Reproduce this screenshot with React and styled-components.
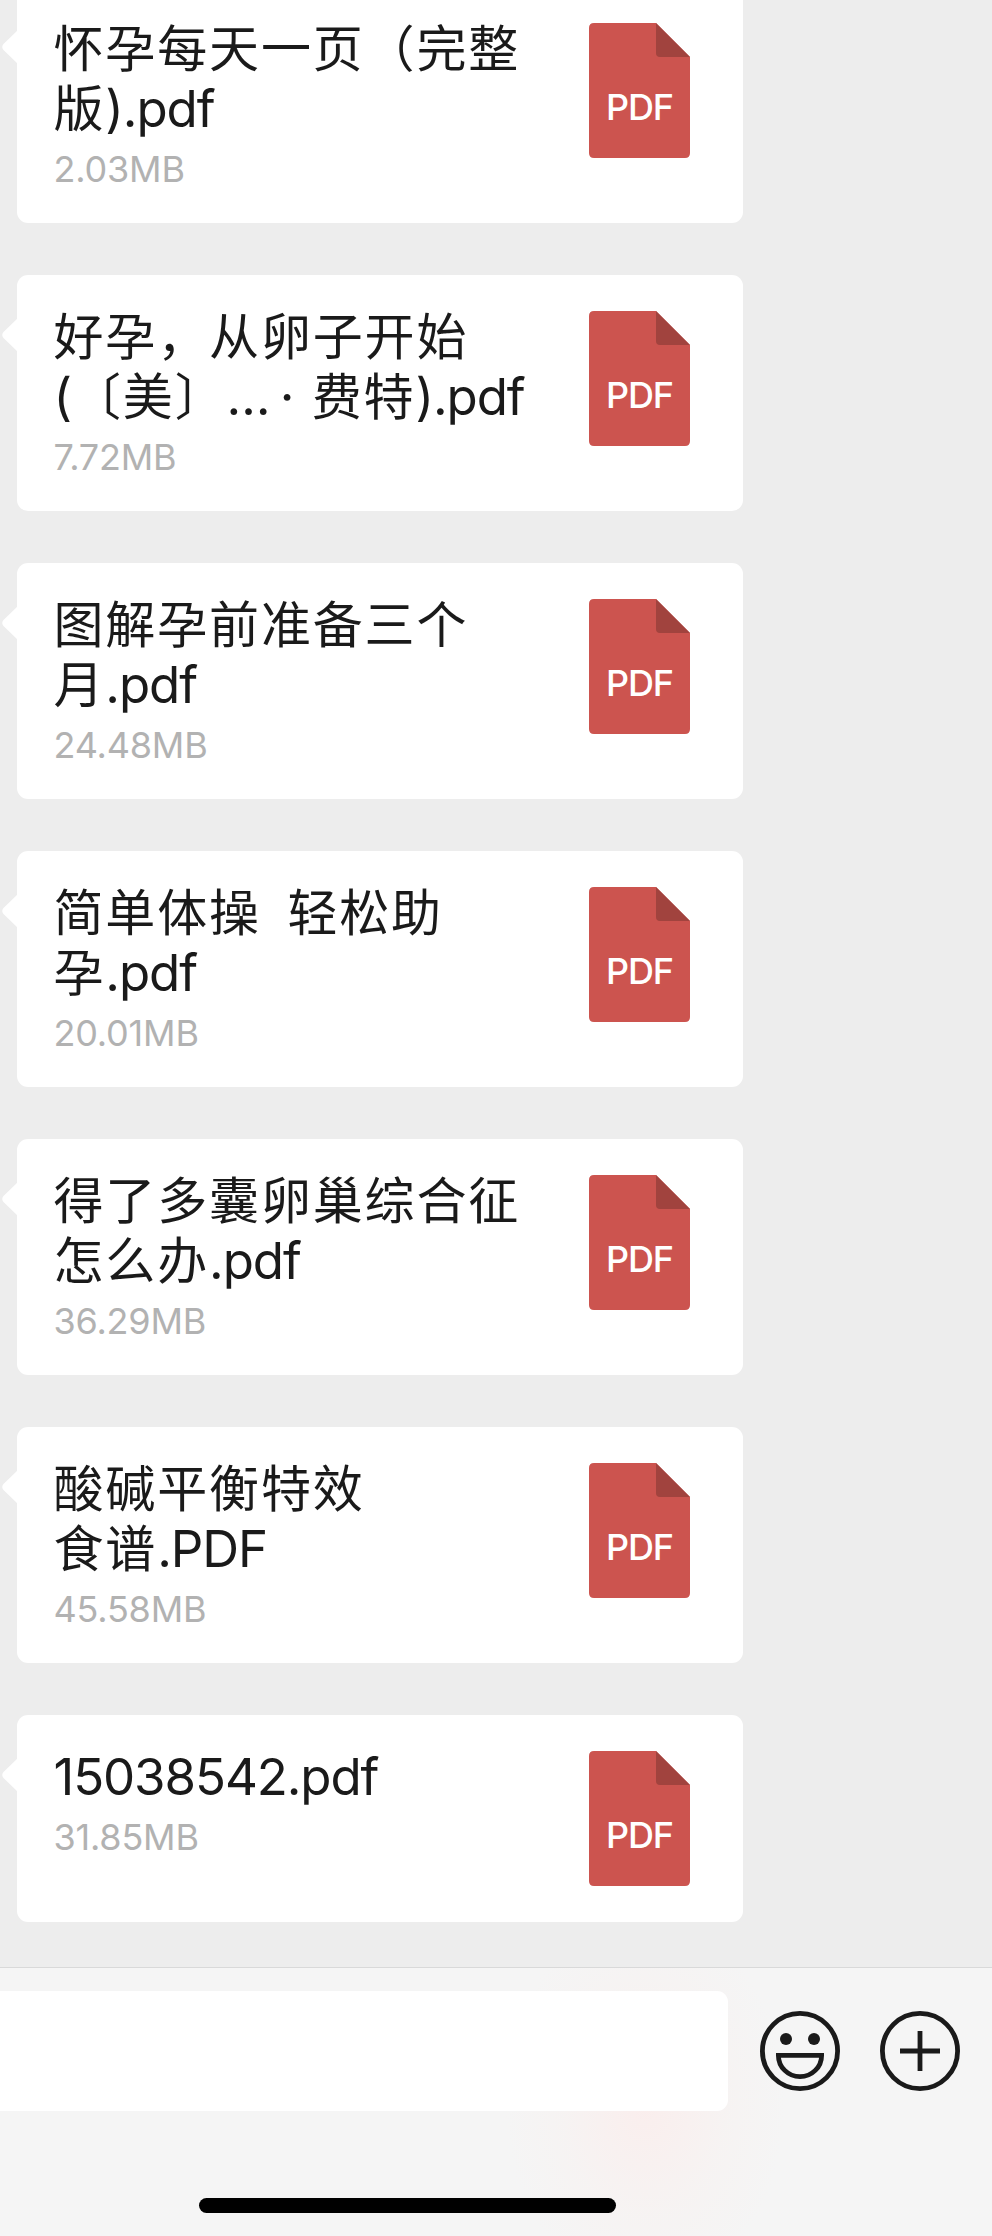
import React from "react"
import styled, { createGlobalStyle } from "styled-components"

const GlobalStyle = createGlobalStyle`
  * {
    box-sizing: border-box;
  }
  body {
    margin: 0;
    background-color: #ededed;
  }
`

const Screen = styled.div`
  display: flex;
  flex-direction: column;
  width: 992px;
  height: 2236px;
  overflow: hidden;
  background-color: #ededed;
  color: #1a1a1a;
  font-family: Inter, "Noto Sans CJK SC", sans-serif;
`

const MessageList = styled.main`
  flex: 1;
  min-height: 0;
  display: flex;
  flex-direction: column;
  justify-content: flex-end;
  gap: 52px;
  padding: 0 0 45px 17px;
`

const Bubble = styled.article`
  position: relative;
  flex: none;
  display: flex;
  justify-content: space-between;
  width: 726px;
  height: ${({ $short }) => ($short ? "207px" : "236px")};
  padding: 32px 53px 0 36.5px;
  border-radius: 11px;
  background-color: #fff;
`

const Tail = styled.svg`
  position: absolute;
  left: -16px;
  top: 43px;
  width: 17px;
  height: 34px;
`

const FileName = styled.h2`
  margin: 0;
  font-size: 50px;
  font-weight: 400;
  line-height: 60px;
  letter-spacing: 1.85px;
  text-spacing-trim: space-all;
  white-space: pre;
`

const NameLine = styled.span`
  display: block;
  height: 60px;
`

const Latin = styled.span`
  font-size: 51px;
  letter-spacing: ${({ $spacing }) => $spacing};
`

const FileSize = styled.p`
  margin: 6px 0 0;
  color: #b2b2b2;
  font-size: 36px;
  letter-spacing: -0.2px;
  line-height: 48px;
`

const FileIcon = styled.svg`
  flex: none;
  width: 101px;
  height: 135px;
  margin-top: 4px;
`

const Footer = styled.footer`
  flex: none;
  display: flex;
  flex-direction: column;
  justify-content: space-between;
  height: 269px;
  padding: 23px 0;
  border-top: 1px solid #d9d9d9;
  background: radial-gradient(ellipse 140px 190px at 645px 135px, #faeeed, rgba(247, 242, 241, 0.6) 60%, rgba(245, 245, 245, 0)), #f5f5f5;
`

const Toolbar = styled.div`
  display: flex;
  align-items: center;
`

const Input = styled.div`
  flex: none;
  width: 728px;
  height: 120px;
  margin-right: 32px;
  border-radius: 0 11px 11px 0;
  background-color: #fff;
`

const IconButton = styled.button`
  flex: none;
  width: 80px;
  height: 80px;
  margin-right: 40px;
  padding: 0;
  border: 0;
  background: none;
  svg {
    display: block;
  }
`

const HomeBar = styled.div`
  width: 417px;
  height: 15px;
  margin-left: 199px;
  border-radius: 8px;
  background-color: #000;
`

const files = [
  { lines: [["怀孕每天一页（完整"], ["版", ").pdf"]], size: "2.03MB" },
  { lines: [["好孕，从卵子开始"], ["", "(", "〔美〕", "…", "", "· ", "费特", ").pdf"]], size: "7.72MB" },
  { lines: [["图解孕前准备三个"], ["月", ".pdf"]], size: "24.48MB" },
  { lines: [["简单体操", "  ", "轻松助"], ["孕", ".pdf"]], size: "20.01MB" },
  { lines: [["得了多囊卵巢综合征"], ["怎么办", ".pdf"]], size: "36.29MB" },
  { lines: [["酸碱平衡特效"], ["食谱", ".PDF"]], size: "45.58MB" },
  { lines: [["", "15038542.pdf"]], size: "31.85MB" },
]

const getSpacing = part => {
  if (part === "…") return "9px"
  if (part === "· ") return "1.5px"
  return "-1.1px"
}

const PdfIcon = () => (
  <FileIcon viewBox="0 0 101 135">
    <path d="M5 0H67L101 34V130Q101 135 96 135H5Q0 135 0 130V5Q0 0 5 0Z" fill="#cc544f" />
    <path d="M67 0L101 34H71Q67 34 67 30Z" fill="#a1433e" />
    <text x="51" y="97" textAnchor="middle" textLength="68" fontSize="36" fontWeight="550" fill="#fff">
      PDF
    </text>
  </FileIcon>
)

const FileMessage = ({ lines, size }) => (
  <Bubble $short={lines.length === 1}>
    <Tail viewBox="0 0 17 34">
      <path d="M17 0L2.5 14Q0 17 2.5 20L17 34Z" fill="#fff" />
    </Tail>
    <div>
      <FileName>
        {lines.map((parts, i) => (
          <NameLine key={i}>
            {/* parts alternate between Chinese and Latin text */}
            {parts.map((part, j) =>
              j % 2 ? <Latin key={j} $spacing={getSpacing(part)}>{part}</Latin> : part
            )}
          </NameLine>
        ))}
      </FileName>
      <FileSize>{size}</FileSize>
    </div>
    <PdfIcon />
  </Bubble>
)

const App = () => (
  <Screen>
    <GlobalStyle />
    <MessageList>
      {files.map(file => (
        <FileMessage key={file.size} {...file} />
      ))}
    </MessageList>
    <Footer>
      <Toolbar>
        <Input />
        <IconButton aria-label="表情">
          <svg width="80" height="80" viewBox="0 0 80 80" fill="none" stroke="#1a1a1a" strokeWidth="4.8">
            <circle cx="40" cy="40" r="37.6" />
            <circle cx="26" cy="28" r="6" fill="#1a1a1a" stroke="none" />
            <circle cx="54" cy="28" r="6" fill="#1a1a1a" stroke="none" />
            <path d="M18.4 44.4H61.6A21.6 21.2 0 0 1 18.4 44.4Z" />
          </svg>
        </IconButton>
        <IconButton aria-label="更多">
          <svg width="80" height="80" viewBox="0 0 80 80" fill="none" stroke="#1a1a1a" strokeWidth="4.8">
            <circle cx="40" cy="40" r="37.6" />
            <path d="M20 40H60M40 20V60" />
          </svg>
        </IconButton>
      </Toolbar>
      <HomeBar />
    </Footer>
  </Screen>
)

export default App
